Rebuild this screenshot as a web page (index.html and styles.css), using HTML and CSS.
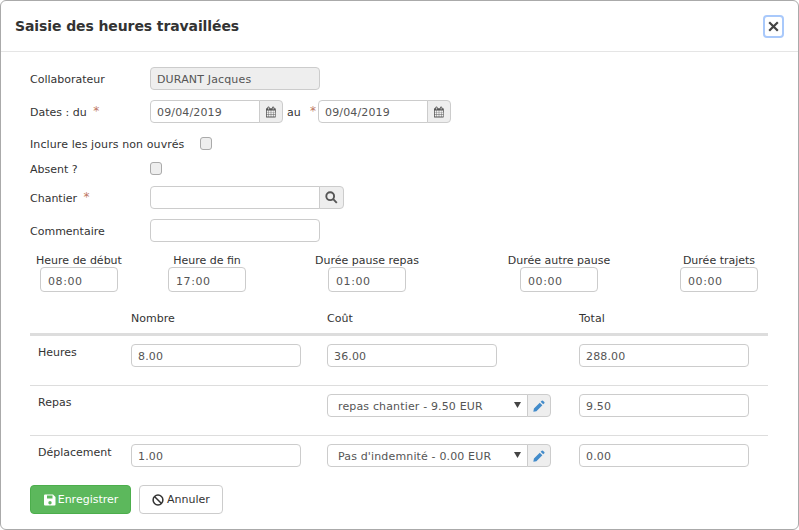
FILE: index.html
```html
<!DOCTYPE html>
<html lang="fr">
    <head>
        <meta charset="UTF-8">
        <meta name="viewport" content="width=device-width, initial-scale=1.0">
        <title>Saisie des heures travaillées</title>
        <link rel="stylesheet" href="styles.css">
    </head>

    <body>
        <svg class="sprite" xmlns="http://www.w3.org/2000/svg">
            <symbol id="i-calendar" viewBox="0 0 1664 1792">
                <path d="M128 1664h288v-288h-288v288zm352 0h320v-288h-320v288zm-352-352h288v-320h-288v320zm352 0h320v-320h-320v320zm-352-384h288v-288h-288v288zm736 736h320v-288h-320v288zm-384-736h320v-288h-320v288zm768 736h288v-288h-288v288zm-384-352h320v-320h-320v320zm-352-864v-288q0-13-9.5-22.5t-22.5-9.5h-64q-13 0-22.5 9.5t-9.5 22.5v288q0 13 9.5 22.5t22.5 9.5h64q13 0 22.5-9.5t9.5-22.5zm736 864h288v-320h-288v320zm-384-384h320v-288h-320v288zm352 0h288v-288h-288v288zm32-480v-288q0-13-9.5-22.5t-22.5-9.5h-64q-13 0-22.5 9.5t-9.5 22.5v288q0 13 9.5 22.5t22.5 9.5h64q13 0 22.5-9.5t9.5-22.5zm384-64v1280q0 52-38 90t-90 38h-1408q-52 0-90-38t-38-90v-1280q0-52 38-90t90-38h128v-96q0-66 47-113t113-47h64q66 0 113 47t47 113v96h384v-96q0-66 47-113t113-47h64q66 0 113 47t47 113v96h128q52 0 90 38t38 90z"/>
            </symbol>
            <symbol id="i-pencil" viewBox="0 0 14 14">
                <path d="M10.2 0.8a1 1 0 0 1 1.4 0l1.6 1.6a1 1 0 0 1 0 1.4l-1.3 1.3-3-3zM7.9 3.1l3 3-6.9 6.9-3.6 0.7 0.7-3.7z"/>
            </symbol>
        </svg>

        <div class="modal">
            <div class="modal-header">
                <h4>Saisie des heures travaillées</h4>
                <button class="close" type="button">
                    <svg width="11" height="11" viewBox="0 0 11 11"><path d="M1.2 1.2l8.6 8.6M9.8 1.2l-8.6 8.6"/></svg>
                </button>
            </div>

            <form class="modal-body">
                <div class="row">
                    <label class="lbl">Collaborateur</label>
                    <input class="field" type="text" value="DURANT Jacques" disabled>
                </div>
                <div class="row dates">
                    <label class="lbl">Dates : du <span class="req">*</span></label>
                    <div class="group">
                        <input class="field short" type="text" value="09/04/2019">
                        <span class="addon"><svg class="cal"><use href="#i-calendar"/></svg></span>
                    </div>
                    <span class="au">au</span>
                    <span class="req req-au">*</span>
                    <div class="group">
                        <input class="field short" type="text" value="09/04/2019">
                        <span class="addon"><svg class="cal"><use href="#i-calendar"/></svg></span>
                    </div>
                </div>
                <div class="row check-row">
                    <label class="lbl lbl-auto">Inclure les jours non ouvrés</label>
                    <span class="check"></span>
                </div>
                <div class="row check-row absent">
                    <label class="lbl">Absent ?</label>
                    <span class="check"></span>
                </div>
                <div class="row chantier">
                    <label class="lbl">Chantier <span class="req">*</span></label>
                    <div class="group">
                        <input class="field" type="text">
                        <span class="addon">
                            <svg width="13" height="13" viewBox="0 0 13 13" class="search"><circle cx="5.2" cy="5.2" r="3.9"/><path d="M8.2 8.2l3.6 3.6"/></svg>
                        </span>
                    </div>
                </div>
                <div class="row">
                    <label class="lbl">Commentaire</label>
                    <input class="field" type="text">
                </div>

                <div class="times">
                    <div class="time"><label>Heure de début</label><input class="field" type="text" value="08:00"></div>
                    <div class="time"><label>Heure de fin</label><input class="field" type="text" value="17:00"></div>
                    <div class="time"><label>Durée pause repas</label><input class="field" type="text" value="01:00"></div>
                    <div class="time"><label>Durée autre pause</label><input class="field" type="text" value="00:00"></div>
                    <div class="time"><label>Durée trajets</label><input class="field" type="text" value="00:00"></div>
                </div>

                <div class="costs">
                    <div class="cost-head">
                        <span></span>
                        <span>Nombre</span>
                        <span>Coût</span>
                        <span>Total</span>
                    </div>
                    <div class="cost-row">
                        <span class="cost-lbl">Heures</span>
                        <input class="field" type="text" value="8.00">
                        <input class="field" type="text" value="36.00">
                        <input class="field" type="text" value="288.00">
                    </div>
                    <div class="cost-row">
                        <span class="cost-lbl">Repas</span>
                        <span></span>
                        <div class="group">
                            <select class="field pick"><option>repas chantier - 9.50 EUR</option></select>
                            <span class="addon"><svg class="pencil"><use href="#i-pencil"/></svg></span>
                        </div>
                        <input class="field" type="text" value="9.50">
                    </div>
                    <div class="cost-row last">
                        <span class="cost-lbl">Déplacement</span>
                        <input class="field" type="text" value="1.00">
                        <div class="group">
                            <select class="field pick"><option>Pas d'indemnité - 0.00 EUR</option></select>
                            <span class="addon"><svg class="pencil"><use href="#i-pencil"/></svg></span>
                        </div>
                        <input class="field" type="text" value="0.00">
                    </div>
                </div>

                <div class="actions">
                    <button class="btn btn-save" type="button">
                        <svg width="12" height="12" viewBox="0 0 12 12"><path fill-rule="evenodd" d="M1 0.5h8l2.5 2.5v7.5a1 1 0 0 1-1 1h-9.500a1 1 0 0 1-1-1v-9a1 1 0 0 1 1-1zM3 1.500v3h5.500v-3zM6 7a1.700 1.700 0 1 0 0 3.400 1.700 1.700 0 0 0 0-3.400z"/></svg>
                        Enregistrer
                    </button>
                    <button class="btn btn-cancel" type="button">
                        <svg width="12" height="12" viewBox="0 0 12 12"><circle cx="6" cy="6" r="4.900"/><path d="M2.500 2.500l7 7"/></svg>
                        Annuler
                    </button>
                </div>
            </form>
        </div>
    </body>
</html>
```

FILE: styles.css
```css
*{
    box-sizing: border-box;
}
body{
    margin: 0;
    background-color: #fff;
    color: #333;
    font-family: "DejaVu Sans", Verdana, sans-serif;
    font-size: 11px;
}
.sprite{
    display: none;
}
.modal{
    height: 530px;
    border: 1px solid #aaa;
    border-radius: 6px;
    background-color: #fff;
}
.modal-header{
    display: flex;
    align-items: center;
    justify-content: space-between;
    height: 51px;
    padding: 0 14px;
    border-bottom: 1px solid #e5e5e5;
}
h4{
    margin: 0;
    font-size: 14px;
    font-weight: bold;
    letter-spacing: -0.1px;
    color: #333;
}
.close{
    display: flex;
    align-items: center;
    justify-content: center;
    width: 21px;
    height: 23px;
    padding: 0;
    background: #fff;
    border: 2px solid #a9c9fb;
    border-radius: 4px;
}
.close path{
    fill: none;
    stroke: #444;
    stroke-width: 2.2;
}
.modal-body{
    padding: 15px 30px 0 29px;
}

/* form rows */
.row{
    display: flex;
    align-items: center;
    height: 23px;
    margin-bottom: 10px;
}
.dates{
    margin-bottom: 14px;
}
.lbl{
    width: 120px;
    flex: none;
    padding-top: 2px;
}
.lbl-auto{
    width: 170px;
    letter-spacing: 0.1px;
}
.req{
    margin-left: 3px;
    color: #bd7763;
    font-size: 12px;
    line-height: 11px;
    vertical-align: 1px;
}
.au{
    margin-left: 4px;
    width: 23px;
    padding-top: 2px;
}
.req-au{
    margin-left: 0;
    width: 8px;
}
.field{
    width: 170px;
    height: 23px;
    padding: 2px 6px 0 6px;
    border: 1px solid #ccc;
    border-radius: 4px;
    background-color: #fff;
    color: #555;
    font-family: inherit;
    font-size: 11px;
    letter-spacing: 0.15px;
    outline: none;
}
.field:disabled{
    background-color: #eee;
}
.short{
    width: 110px;
}
.group{
    display: flex;
}
.group .field{
    border-radius: 4px 0 0 4px;
}
.addon{
    display: flex;
    align-items: center;
    justify-content: center;
    width: 24px;
    height: 23px;
    margin-left: -1px;
    border: 1px solid #ccc;
    border-radius: 0 4px 4px 0;
    background-color: #eee;
}
.chantier .addon{
    width: 25px;
}
.cal{
    width: 10px;
    height: 12px;
    fill: #555;
}
.search circle,
.search path{
    fill: none;
    stroke: #555;
    stroke-width: 1.900;
}
.pencil{
    width: 12px;
    height: 12px;
    fill: #428bca;
}
.check{
    display: block;
    width: 12px;
    height: 13px;
    border: 1px solid #aaa;
    border-radius: 3px;
    background-color: #eee;
}
.check-row{
    height: 13px;
    margin-bottom: 12px;
}
.absent{
    margin-bottom: 11px;
}

/* heures */
.times{
    display: grid;
    grid-template-columns: 98px 158px 162px 222px 98px;
    margin-top: 12px;
}
.time{
    display: flex;
    flex-direction: column;
    align-items: center;
}
.time label{
    line-height: 13px;
}
.time .field{
    width: 78px;
    height: 25px;
    padding: 3px 7px 0 7px;
    letter-spacing: 0.6px;
}

/* couts */
.costs{
    margin-top: 20px;
}
.cost-head,
.cost-row{
    display: grid;
    grid-template-columns: 101px 196px 252px 189px;
}
.cost-head{
    height: 24px;
    line-height: 13px;
    border-bottom: 3px solid #ddd;
}
.cost-row{
    height: 50px;
    padding-top: 8px;
    border-bottom: 1px solid #ddd;
}
.cost-row.last{
    border-bottom: none;
    height: 49px;
}
.cost-lbl{
    padding: 2px 0 0 8px;
}
.pick{
    width: 201px;
    padding: 1px 0 0 10px;
    appearance: none;
    background-image: url("data:image/svg+xml,%3Csvg xmlns='http://www.w3.org/2000/svg' width='7' height='6'%3E%3Cpath d='M0 0h7L3.500 6z' fill='%23444'/%3E%3C/svg%3E");
    background-repeat: no-repeat;
    background-position: 186px 7px;
}

/* boutons */
.actions{
    display: flex;
    gap: 8px;
}
.btn{
    display: flex;
    align-items: center;
    justify-content: center;
    gap: 3px;
    height: 29px;
    padding: 0;
    border: 1px solid #ccc;
    border-radius: 4px;
    background-color: #fff;
    color: #333;
    font-family: inherit;
    font-size: 11px;
}
.btn-save{
    width: 101px;
    gap: 2px;
    padding-left: 1px;
    border-color: #4cae4c;
    background-color: #5cb85c;
    color: #fff;
}
.btn-save svg{
    fill: #fff;
}
.btn-cancel{
    width: 84px;
}
.btn-cancel circle,
.btn-cancel path{
    fill: none;
    stroke: #333;
    stroke-width: 1.500;
}
```
